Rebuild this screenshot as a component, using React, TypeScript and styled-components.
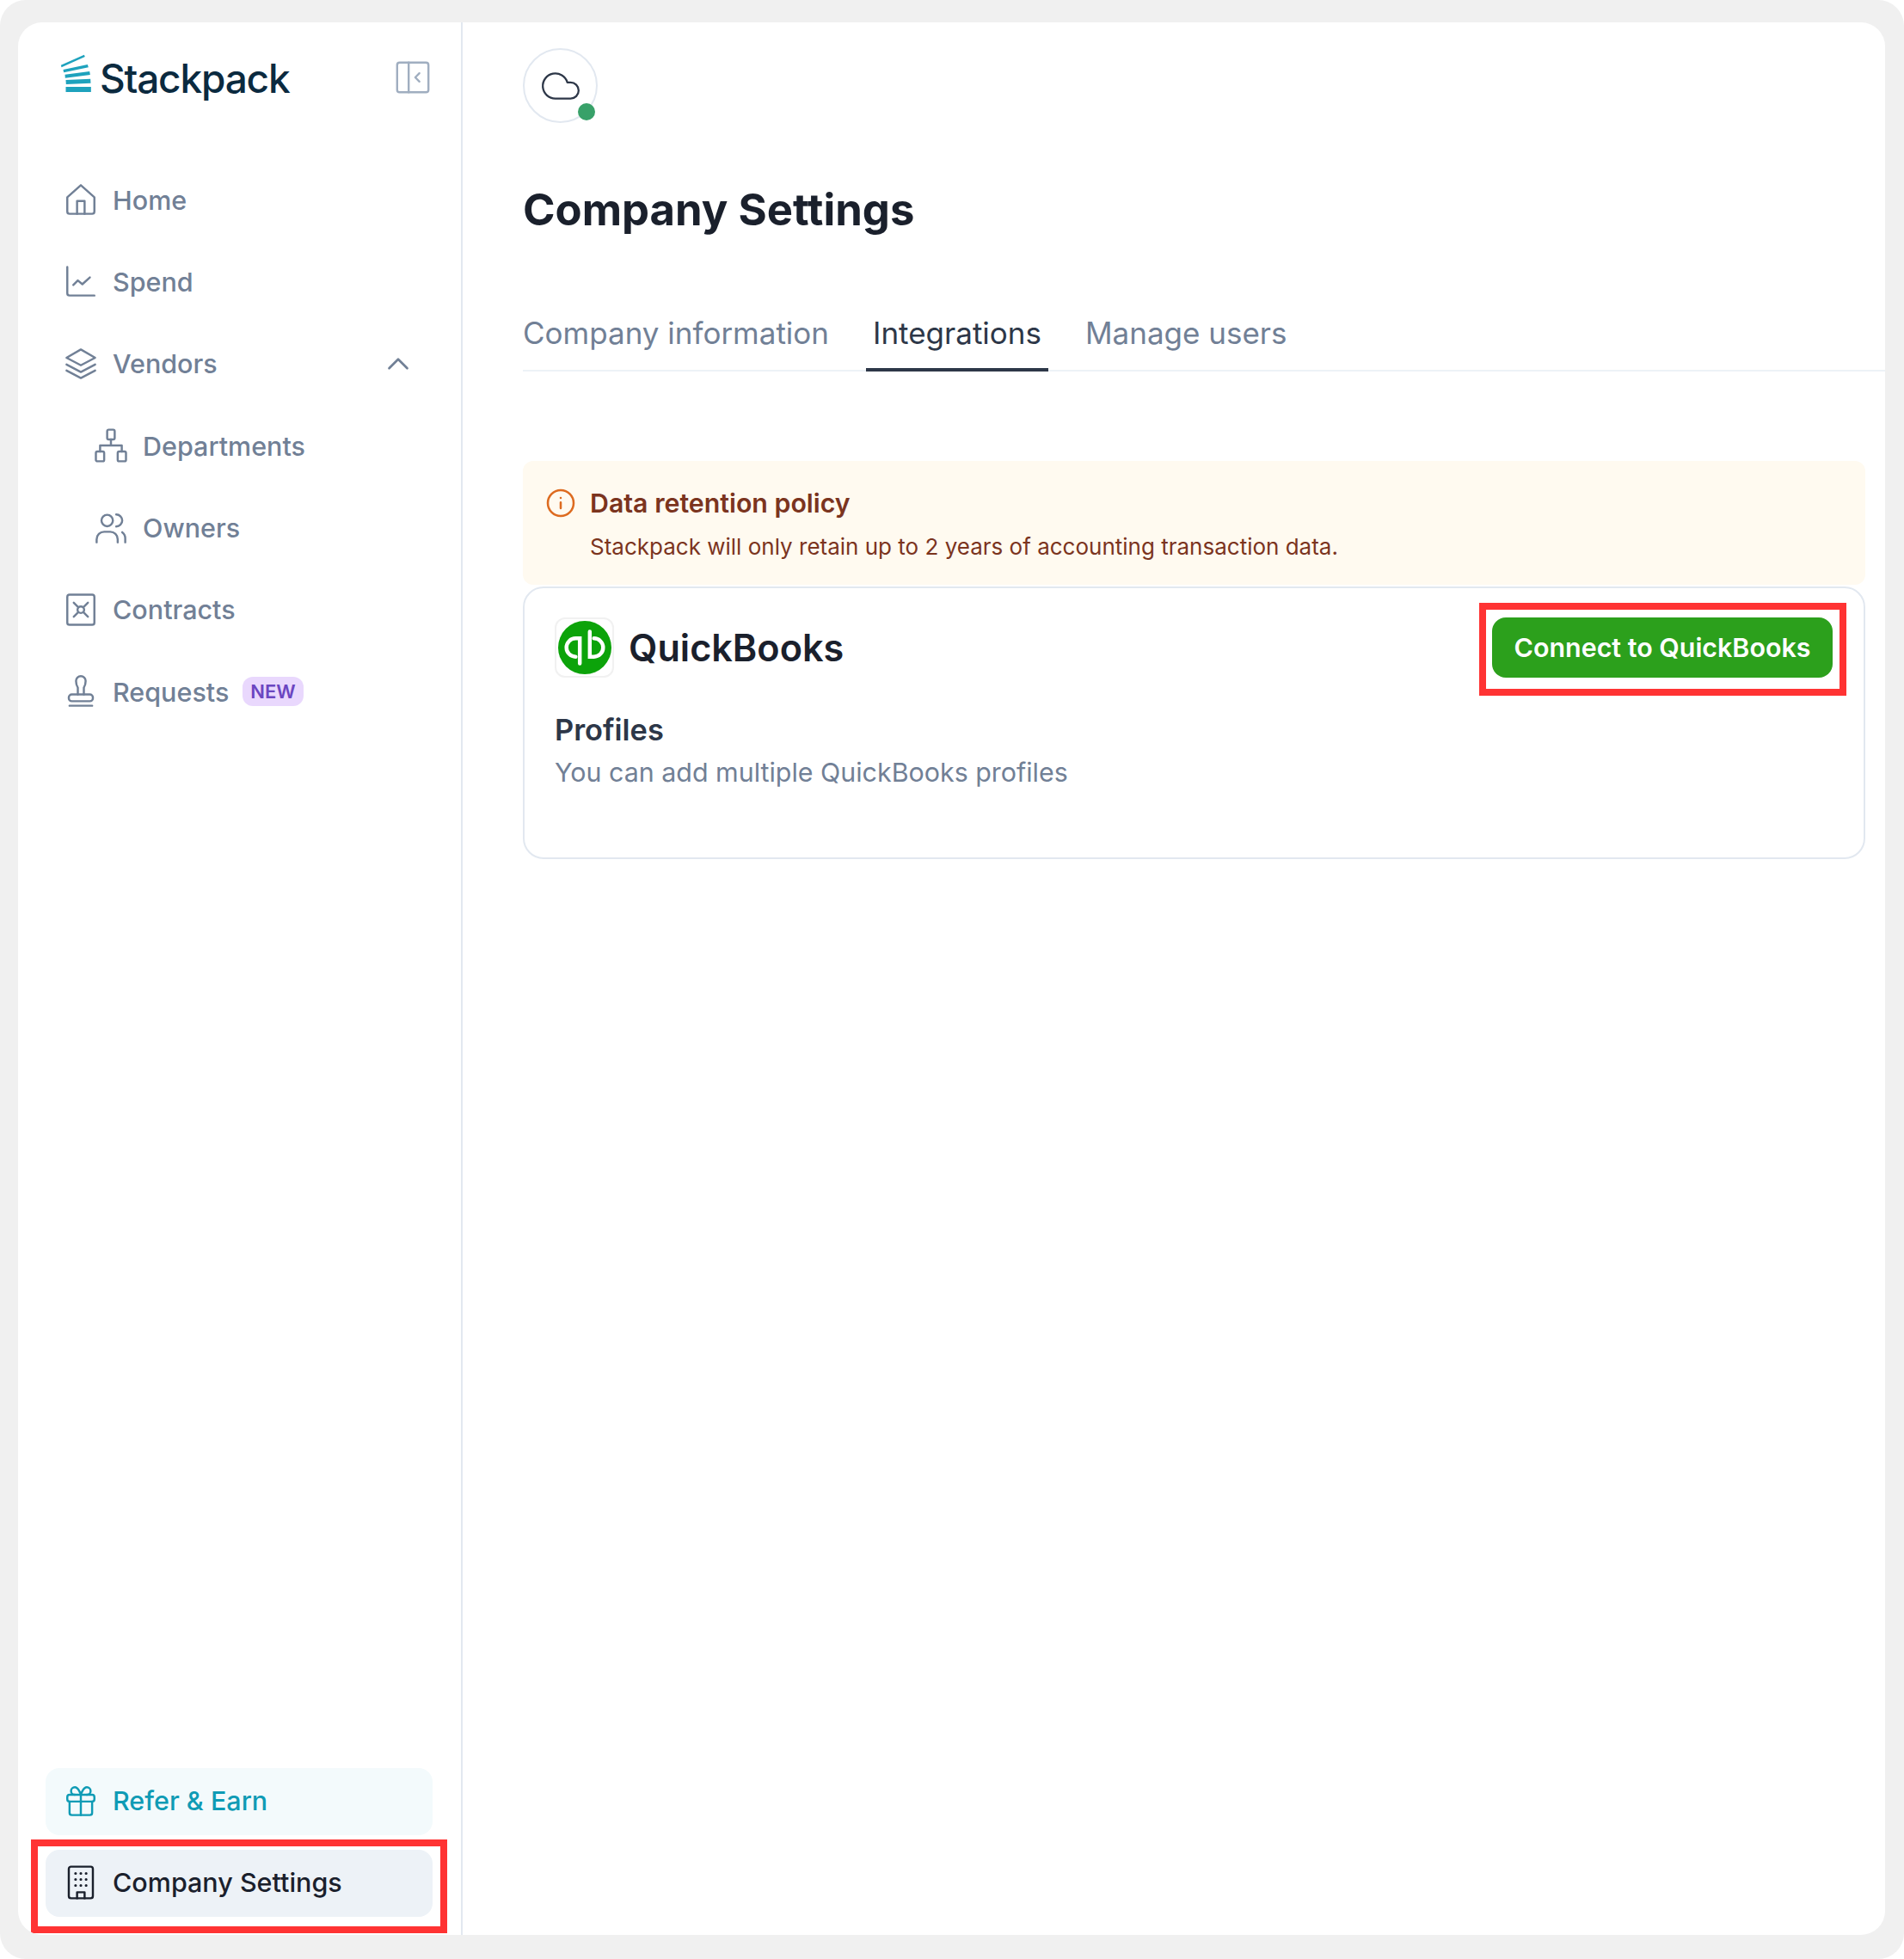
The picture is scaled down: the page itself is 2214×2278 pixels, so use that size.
import React from "react";
import styled, { createGlobalStyle } from "styled-components";

const GlobalStyle = createGlobalStyle`
  html, body {
    margin: 0;
    padding: 0;
    background: #fff;
    font-family: "Inter", "Liberation Sans", sans-serif;
  }
  * {
    box-sizing: border-box;
  }
`;

const Frame = styled.div`
  width: 2214px;
  height: 2278px;
  padding: 26px 22px 28px 21px;
  background: #f0f0f0;
  border-radius: 30px;
`;

const Window = styled.div`
  display: flex;
  height: 100%;
  background: #fff;
  border-radius: 28px;
  overflow: hidden;
`;

const Sidebar = styled.aside`
  display: flex;
  flex-direction: column;
  flex: none;
  width: 517px;
  padding-bottom: 21px;
  border-right: 2px solid #e2e8f0;
`;

const LogoRow = styled.div`
  display: flex;
  align-items: center;
  justify-content: space-between;
  height: 167px;
  padding: 0 33px 39px 49px;
`;

const Logo = styled.div`
  display: flex;
  align-items: center;
  gap: 9px;
  padding-top: 2px;
`;

const MarkWrap = styled.span`
  display: flex;
  margin-bottom: 12px;
`;

const LogoText = styled.span`
  font-family: "Inter", sans-serif;
  font-size: 46px;
  font-weight: 500;
  letter-spacing: -1.2px;
  color: #0b2a3f;
`;

const Nav = styled.nav`
  display: flex;
  flex-direction: column;
  gap: 17.4px;
  flex: 1;
  padding: 0 33px 0 32px;
`;

const BottomNav = styled(Nav)`
  flex: none;
  gap: 17px;
`;

const NavItem = styled.div<{ $nested?: boolean; $tone?: "refer" | "active" }>`
  position: relative;
  display: flex;
  align-items: center;
  gap: 16px;
  flex: none;
  height: 78px;
  padding-left: ${(props) => (props.$nested ? "55px" : "20px")};
  padding-bottom: ${(props) => (props.$tone ? "3px" : "0")};
  border-radius: 16px;
  font-size: 30.5px;
  font-weight: 500;
  color: ${(props) =>
    props.$tone === "refer"
      ? "#0f9bb5"
      : props.$tone === "active"
        ? "#1a202c"
        : "#718096"};
  background: ${(props) =>
    props.$tone === "refer"
      ? "#f3fafc"
      : props.$tone === "active"
        ? "#edf2f7"
        : "transparent"};
`;

const Toggle = styled.span`
  display: flex;
  margin-left: auto;
  margin-right: 22px;
`;

const NewBadge = styled.span`
  padding: 4px 9px;
  border-radius: 12px;
  background: #e9d8fd;
  color: #6b46c1;
  font-size: 22px;
  line-height: 26px;
  font-weight: 600;
`;

const Highlight = styled.div`
  position: absolute;
  top: -12px;
  right: -17px;
  bottom: -19px;
  left: -17px;
  border: 8px solid #ff3333;
  pointer-events: none;
`;

const Main = styled.main`
  flex: 1;
  min-width: 0;
  padding: 30px 23px 0 70px;
`;

const Avatar = styled.div`
  position: relative;
  display: flex;
  align-items: center;
  justify-content: center;
  width: 87px;
  height: 87px;
  border: 2px solid #e2e8f0;
  border-radius: 50%;
`;

const StatusDot = styled.span`
  position: absolute;
  right: 1px;
  bottom: 1px;
  width: 20px;
  height: 20px;
  border-radius: 50%;
  background: #38a169;
`;

const Title = styled.h1`
  margin: 71px 0 0;
  font-size: 50.8px;
  line-height: 60px;
  font-weight: 700;
  color: #1a202c;
`;

const Tabs = styled.div`
  display: flex;
  gap: 35px;
  height: 80px;
  margin: 78px -23px 0 0;
  border-bottom: 2px solid #edf2f7;
`;

const Tab = styled.div<{ $active?: boolean }>`
  display: flex;
  align-items: center;
  height: 80px;
  padding: 0 8px 6px;
  font-size: 35px;
  color: ${(props) => (props.$active ? "#2d3748" : "#718096")};
  border-bottom: 4px solid
    ${(props) => (props.$active ? "#2d3748" : "transparent")};

  &:first-child {
    padding-left: 0;
  }
`;

const Alert = styled.div`
  display: flex;
  gap: 16px;
  height: 144px;
  margin-top: 104px;
  padding: 31px 26px;
  border-radius: 12px;
  background: #fffaf0;
  color: #7b341e;
`;

const AlertBody = styled.div`
  display: flex;
  flex-direction: column;
  gap: 15px;
`;

const AlertTitle = styled.div`
  font-size: 30.3px;
  line-height: 36px;
  font-weight: 600;
`;

const AlertText = styled.div`
  font-size: 26px;
  line-height: 36px;
`;

const Card = styled.section`
  height: 317px;
  margin-top: 2px;
  padding: 34px 36px 32px 35px;
  border: 2px solid #e2e8f0;
  border-radius: 24px;
`;

const CardHead = styled.div`
  display: flex;
  align-items: center;
  justify-content: space-between;
`;

const Brand = styled.div`
  display: flex;
  align-items: center;
  gap: 17px;
`;

const BrandTile = styled.div`
  display: flex;
  align-items: center;
  justify-content: center;
  width: 69px;
  height: 70px;
  border: 2px solid #f1f1f1;
  border-radius: 12px;
`;

const BrandName = styled.span`
  font-size: 43.2px;
  font-weight: 600;
  color: #1a202c;
`;

const ConnectButton = styled.button`
  position: relative;
  height: 70px;
  width: 396px;
  padding: 0;
  border: 0;
  border-radius: 16px;
  background: #2ca01c;
  color: #fff;
  font-family: inherit;
  font-size: 30.4px;
  font-weight: 600;
`;

const ButtonHighlight = styled(Highlight)`
  top: -17px;
  right: -16px;
  bottom: -21px;
  left: -15px;
`;

const ProfilesTitle = styled.div`
  margin-top: 41px;
  font-size: 34.4px;
  line-height: 40px;
  font-weight: 600;
  color: #2d3748;
`;

const ProfilesText = styled.div`
  margin-top: 9px;
  font-size: 30.4px;
  line-height: 40px;
  color: #718096;
`;

const Icon = ({
  children,
  size = 42,
  stroke = "currentColor",
  width = 1.4,
}: {
  children: React.ReactNode;
  size?: number;
  stroke?: string;
  width?: number;
}) => (
  <svg
    width={size}
    height={size}
    viewBox="0 0 24 24"
    fill="none"
    stroke={stroke}
    strokeWidth={width}
    strokeLinecap="round"
    strokeLinejoin="round"
    style={{ flex: "none" }}
  >
    {children}
  </svg>
);

const StackpackMark = () => (
  <svg width="37" height="45" viewBox="30 40 110 135" style={{ flex: "none" }}>
    <g fill="#1ea2bd">
      <polygon points="32,78 113,42 116,49 34,86" />
      <polygon points="40,94 125,76 128,86 42,104" />
      <polygon points="46,111 132,100 134,112 47,123" />
      <polygon points="49,130 135,126 136,141 50,145" />
      <rect x="49" y="154" width="88" height="18" />
    </g>
  </svg>
);

const QuickBooksMark = () => (
  <svg width="62" height="64" viewBox="0 0 64 64">
    <circle cx="32" cy="32" r="32" fill="#0ca30a" />
    <g fill="none" stroke="#fff" strokeWidth="4.6" strokeLinecap="round">
      <path d="M21 43a11 11 0 0 1 0-22h5v30" />
      <path d="M43 21a11 11 0 0 1 0 22h-5V13" />
    </g>
  </svg>
);

const App = () => {
  return (
    <>
      <GlobalStyle />
      <Frame>
        <Window>
          <Sidebar>
            <LogoRow>
              <Logo>
                <MarkWrap>
                  <StackpackMark />
                </MarkWrap>
                <LogoText>Stackpack</LogoText>
              </Logo>
              <Icon stroke="#a0aec0" size={46} width={1.25}>
                <rect x="2.5" y="3" width="19" height="18" rx="1.5" />
                <path d="M9.5 3v18" />
                <path d="M16 9.5 13.5 12l2.5 2.5" />
              </Icon>
            </LogoRow>
            <Nav>
              <NavItem>
                <Icon>
                  <path d="M3 10.5 12 2.5l9 8V20a1.5 1.5 0 0 1-1.5 1.5h-15A1.5 1.5 0 0 1 3 20z" />
                  <path d="M9.5 21.5V13h5v8.5" />
                </Icon>
                Home
              </NavItem>
              <NavItem>
                <Icon>
                  <path d="M3 2.5V20a1.5 1.5 0 0 0 1.5 1.5H21" />
                  <path d="M7 14.5 10 11.5l3 2.5 5-4.5" />
                </Icon>
                Spend
              </NavItem>
              <NavItem>
                <Icon>
                  <path d="M12 2.5 21.5 8 12 13 2.5 8z" />
                  <path d="M2.5 12.5 12 17.5l9.5-5" />
                  <path d="M2.5 16.5 12 21.5l9.5-5" />
                </Icon>
                Vendors
                <Toggle>
                  <Icon size={36} width={1.8}>
                    <path d="M5 15.5 12 8.5l7 7" />
                  </Icon>
                </Toggle>
              </NavItem>
              <NavItem $nested>
                <Icon>
                  <rect x="9.5" y="1.5" width="5" height="6.5" rx="1" />
                  <rect x="2" y="16" width="5.5" height="6.5" rx="1" />
                  <rect x="16.5" y="16" width="5.5" height="6.5" rx="1" />
                  <path d="M12 8v4M4.8 16v-4H19.2v4" />
                </Icon>
                Departments
              </NavItem>
              <NavItem $nested>
                <Icon>
                  <circle cx="9.5" cy="7" r="3.8" />
                  <path d="M2.5 21.5v-2a5 5 0 0 1 5-5h4a5 5 0 0 1 5 5v2" />
                  <path d="M15.5 3a4 4 0 0 1 0 8" />
                  <path d="M19.5 14.8a5 5 0 0 1 2 4.2v2.5" />
                </Icon>
                Owners
              </NavItem>
              <NavItem>
                <Icon>
                  <rect x="3" y="2" width="18" height="20" rx="1.5" />
                  <circle cx="12" cy="12" r="2.2" />
                  <path d="m7.3 7.3 3 3M16.7 7.3l-3 3M7.3 16.7l3-3M16.7 16.7l-3-3" />
                </Icon>
                Contracts
              </NavItem>
              <NavItem>
                <Icon>
                  <path d="M10 14V9.5C9 8 8.8 7 8.8 5a3.2 3.2 0 0 1 6.4 0c0 2-.2 3-1.2 4.5V14" />
                  <rect x="4" y="14" width="16" height="4.5" rx="2" />
                  <path d="M4.5 21.5h15" />
                </Icon>
                Requests
                <NewBadge>NEW</NewBadge>
              </NavItem>
            </Nav>
            <BottomNav>
              <NavItem $tone="refer">
                <Icon>
                  <rect x="3" y="8" width="18" height="4.5" rx="1.5" />
                  <path d="M4.5 12.5V20A1.5 1.5 0 0 0 6 21.5h12a1.5 1.5 0 0 0 1.5-1.5v-7.5" />
                  <path d="M12 8v13.5" />
                  <path d="M12 8S10.5 3 8 3a2.5 2.5 0 0 0 0 5M12 8s1.5-5 4-5a2.5 2.5 0 0 1 0 5" />
                </Icon>
                Refer &amp; Earn
              </NavItem>
              <NavItem $tone="active">
                <Icon>
                  <rect x="4" y="1.5" width="16" height="21" rx="1.5" />
                  <path d="M9.5 22.5v-4h5v4" />
                  <path
                    d="M8.5 6h.01M12 6h.01M15.5 6h.01M8.5 10h.01M12 10h.01M15.5 10h.01M8.5 14h.01M12 14h.01M15.5 14h.01"
                    strokeWidth={1.8}
                  />
                </Icon>
                Company Settings
                <Highlight />
              </NavItem>
            </BottomNav>
          </Sidebar>
          <Main>
            <Avatar>
              <Icon stroke="#2d3748" size={50} width={1.1}>
                <path d="M17.5 19H9a7 7 0 1 1 6.71-9h1.79a4.5 4.5 0 1 1 0 9Z" />
              </Icon>
              <StatusDot />
            </Avatar>
            <Title>Company Settings</Title>
            <Tabs>
              <Tab>Company information</Tab>
              <Tab $active>Integrations</Tab>
              <Tab>Manage users</Tab>
            </Tabs>
            <Alert>
              <Icon stroke="#dd6b20" size={36} width={1.7}>
                <circle cx="12" cy="12" r="10" />
                <path d="M12 16v-4.5M12 8h.01" />
              </Icon>
              <AlertBody>
                <AlertTitle>Data retention policy</AlertTitle>
                <AlertText>
                  Stackpack will only retain up to 2 years of accounting
                  transaction data.
                </AlertText>
              </AlertBody>
            </Alert>
            <Card>
              <CardHead>
                <Brand>
                  <BrandTile>
                    <QuickBooksMark />
                  </BrandTile>
                  <BrandName>QuickBooks</BrandName>
                </Brand>
                <ConnectButton>
                  Connect to QuickBooks
                  <ButtonHighlight />
                </ConnectButton>
              </CardHead>
              <ProfilesTitle>Profiles</ProfilesTitle>
              <ProfilesText>You can add multiple QuickBooks profiles</ProfilesText>
            </Card>
          </Main>
        </Window>
      </Frame>
    </>
  );
};

export default App;
